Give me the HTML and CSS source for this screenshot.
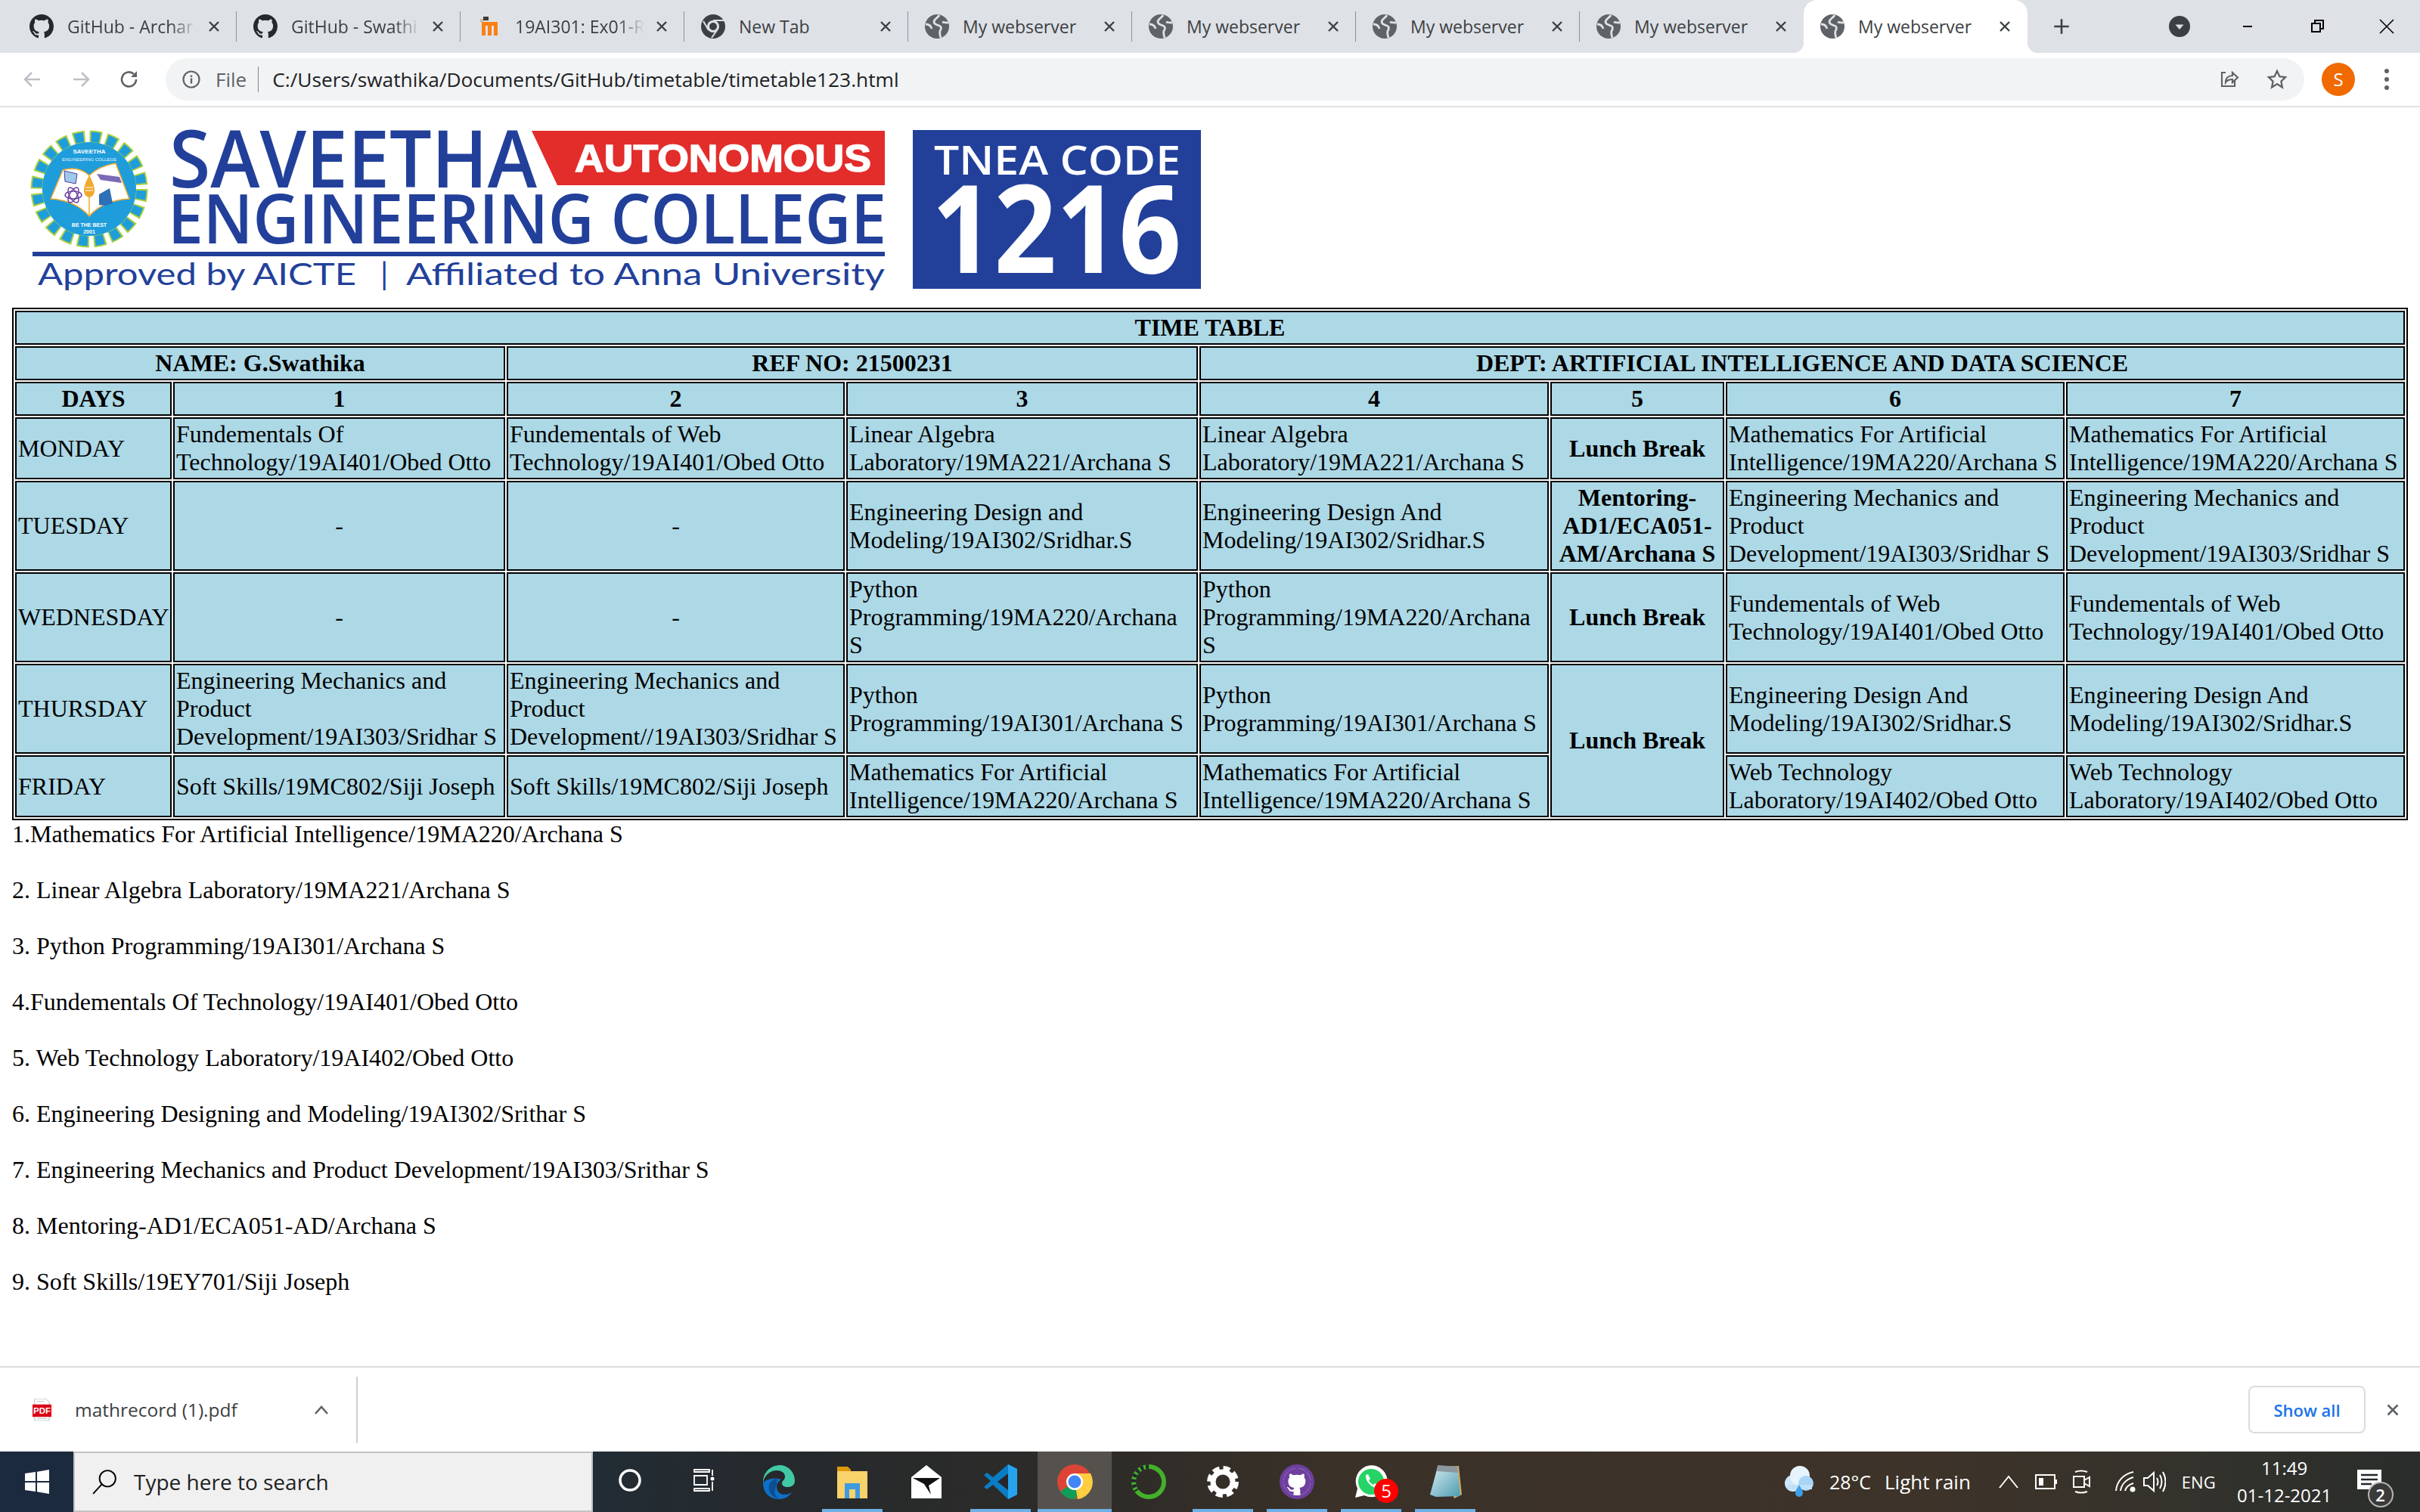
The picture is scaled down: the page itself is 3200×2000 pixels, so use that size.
FILE: index.html
```html
<!DOCTYPE html>
<html lang="en">
<head>
  <meta charset="UTF-8" />
  <title>My webserver</title>
  <link rel="stylesheet" href="styles.css">
</head>
<body>

  <svg class="defs" width="0" height="0">
    <symbol id="gh" viewBox="0 0 16 16">
      <path d="M8 0C3.58 0 0 3.58 0 8c0 3.54 2.29 6.53 5.47 7.59.4.07.55-.17.55-.38 0-.19-.01-.82-.01-1.49-2.01.37-2.53-.49-2.78-.94-.09-.23-.48-.94-.82-1.13-.28-.15-.68-.52-.01-.53.63-.01 1.08.58 1.23.82.72 1.21 1.87.87 2.33.66.07-.52.28-.87.51-1.07-1.78-.2-3.64-.89-3.64-3.95 0-.87.31-1.59.82-2.15-.08-.2-.36-1.02.08-2.12 0 0 .67-.21 2.2.82.64-.18 1.32-.27 2-.27.68 0 1.36.09 2 .27 1.53-1.04 2.2-.82 2.2-.82.44 1.1.16 1.92.08 2.12.51.56.82 1.27.82 2.15 0 3.07-1.87 3.75-3.65 3.95.29.25.54.73.54 1.48 0 1.07-.01 1.93-.01 2.2 0 .21.15.46.55.38A8.013 8.013 0 0016 8c0-4.42-3.58-8-8-8z"/>
    </symbol>
    <symbol id="globe" viewBox="0 0 32 32">
      <circle cx="16" cy="16" r="16" fill="#5f6368"/>
      <path d="M19 1C17 5 12 6 12 10c0 3 4 4 7 5 3 1 3 4 1 7-1 3 0 6 1 9M1 13c4 0 7 2 8 6M23 10c2 1 5 1 8 1" fill="none" stroke="#dee1e6" stroke-width="2.800"/>
    </symbol>
    <symbol id="close" viewBox="0 0 24 24">
      <path d="M6 6l12 12M18 6L6 18" fill="none" stroke="currentColor" stroke-width="2.4"/>
    </symbol>
    <linearGradient id="pad" x1="0" y1="0" x2="1" y2="1">
      <stop offset="0" stop-color="#d7edf3"/>
      <stop offset="1" stop-color="#4d9bb0"/>
    </linearGradient>
  </svg>

  <header class="tabs">
    <div class="tab">
      <svg class="favicon dark"><use href="#gh"/></svg>
      <span class="tab-title fade">GitHub - Archar</span>
      <svg class="tab-x"><use href="#close"/></svg>
    </div>
    <div class="tab">
      <svg class="favicon dark"><use href="#gh"/></svg>
      <span class="tab-title fade">GitHub - Swathi</span>
      <svg class="tab-x"><use href="#close"/></svg>
    </div>
    <div class="tab">
      <svg class="favicon" viewBox="0 0 32 32">
        <path d="M4 6h4v4H4z" fill="#c9b9a8"/>
        <path d="M8 3h7v5h-7z" fill="#3f3a36"/>
        <path d="M6 10h5v18H6zM14 12h5v16h-5zM22 12h5v16h-5zM6 10h21v5H6z" fill="#f98012"/>
      </svg>
      <span class="tab-title fade">19AI301: Ex01-R</span>
      <svg class="tab-x"><use href="#close"/></svg>
    </div>
    <div class="tab">
      <svg class="favicon" viewBox="0 0 32 32">
        <circle cx="16" cy="16" r="16" fill="#3c4043"/>
        <circle cx="16" cy="16" r="8" fill="#dee1e6"/>
        <circle cx="16" cy="16" r="5" fill="#3c4043"/>
        <path d="M16 8h14M10 21L3 9M21 21l-7 10" stroke="#dee1e6" stroke-width="2" fill="none"/>
      </svg>
      <span class="tab-title">New Tab</span>
      <svg class="tab-x"><use href="#close"/></svg>
    </div>
    <div class="tab">
      <svg class="favicon"><use href="#globe"/></svg>
      <span class="tab-title">My webserver</span>
      <svg class="tab-x"><use href="#close"/></svg>
    </div>
    <div class="tab">
      <svg class="favicon"><use href="#globe"/></svg>
      <span class="tab-title">My webserver</span>
      <svg class="tab-x"><use href="#close"/></svg>
    </div>
    <div class="tab">
      <svg class="favicon"><use href="#globe"/></svg>
      <span class="tab-title">My webserver</span>
      <svg class="tab-x"><use href="#close"/></svg>
    </div>
    <div class="tab no-sep">
      <svg class="favicon"><use href="#globe"/></svg>
      <span class="tab-title">My webserver</span>
      <svg class="tab-x"><use href="#close"/></svg>
    </div>
    <div class="tab active">
      <svg class="favicon"><use href="#globe"/></svg>
      <span class="tab-title">My webserver</span>
      <svg class="tab-x"><use href="#close"/></svg>
    </div>
    <svg class="new-tab" viewBox="0 0 24 24"><path d="M12 3v18M3 12h18" stroke="#3c4043" stroke-width="2.4"/></svg>
    <svg class="tab-search" viewBox="0 0 28 28">
      <circle cx="14" cy="14" r="14" fill="#3c4043"/>
      <path d="M8.5 11.5h11L14 18z" fill="#dee1e6"/>
    </svg>
    <svg class="win-btn first" viewBox="0 0 24 24"><path d="M6 12h12" stroke="#000" stroke-width="2"/></svg>
    <svg class="win-btn" viewBox="0 0 24 24"><path d="M5 8h11v11H5zM9 8V4h11v11h-4" fill="none" stroke="#000" stroke-width="2"/></svg>
    <svg class="win-btn" viewBox="0 0 24 24"><path d="M3 3l18 18M21 3L3 21" stroke="#000" stroke-width="1.6"/></svg>
  </header>

  <nav class="toolbar">
    <svg class="nav-icon muted" viewBox="0 0 28 28"><path d="M24 14H5M13 5l-9 9 9 9" fill="none" stroke="currentColor" stroke-width="2.6"/></svg>
    <svg class="nav-icon muted" viewBox="0 0 28 28"><path d="M4 14h19M15 5l9 9-9 9" fill="none" stroke="currentColor" stroke-width="2.6"/></svg>
    <svg class="nav-icon" viewBox="0 0 28 28"><path d="M23 14a9.5 9.5 0 1 1-3-7" fill="none" stroke="currentColor" stroke-width="2.6"/><path d="M24 3v8h-8z" fill="currentColor"/></svg>
    <div class="omnibox">
      <svg class="info" viewBox="0 0 24 24">
        <circle cx="12" cy="12" r="10.5" fill="none" stroke="#5f6368" stroke-width="2.2"/>
        <path d="M12 10.5v7M12 6.5v2.4" stroke="#5f6368" stroke-width="2.4"/>
      </svg>
      <span class="scheme">File</span>
      <span class="url">C:/Users/swathika/Documents/GitHub/timetable/timetable123.html</span>
      <svg class="omni-icon share" viewBox="0 0 28 28">
        <path d="M10 5H5v18h17v-7" fill="none" stroke="#5f6368" stroke-width="2.2"/>
        <path d="M10 18c0-6 4-9 9-9V5l7 6.5L19 18v-4c-4 0-7 1-9 4z" fill="none" stroke="#5f6368" stroke-width="2.2"/>
      </svg>
      <svg class="omni-icon" viewBox="0 0 28 28">
        <path d="M14 3l3.4 7.2 7.6 1-5.6 5.4 1.5 7.9L14 20l-6.900 4.500 1.500-7.900L3 11.200l7.600-1z" fill="none" stroke="#5f6368" stroke-width="2.300"/>
      </svg>
    </div>
    <div class="avatar">S</div>
    <svg class="dots" viewBox="0 0 8 32"><circle cx="4" cy="5" r="3"/><circle cx="4" cy="16" r="3"/><circle cx="4" cy="27" r="3"/></svg>
  </nav>

  <main class="page">
    <svg class="logo" viewBox="16 150 1600 257">
      <!-- seal -->
      <circle cx="118" cy="250" r="69" fill="none" stroke="#a9cf3f" stroke-width="17" stroke-dasharray="15.500 6.180"/>
      <circle cx="118" cy="250" r="69" fill="none" stroke="#1f9ddb" stroke-width="13" stroke-dasharray="11.500 10.180" stroke-dashoffset="-2"/>
      <circle cx="118" cy="250" r="62" fill="#1f9ddb"/>
      <text class="seal-name" x="118" y="203" text-anchor="middle">SAVEETHA</text>
      <text class="seal-sub" x="118" y="213" text-anchor="middle">ENGINEERING COLLEGE</text>
      <path d="M83 225q20-6 35 7 14-13 35-16l18 47q-35 2-53 23-18-21-51-23z" fill="#fff" stroke="#f1a92d" stroke-width="1.500"/>
      <path d="M118 232v54" stroke="#f1a92d" stroke-width="1.500"/>
      <path d="M118 232q7 12 7 20a7 9 0 0 1-14 0q0-8 7-20z" fill="#f1a92d"/>
      <path d="M113 248h10M113 252h10" stroke="#fff"/>
      <path d="M85 226l17 4-2 13-14-3z" fill="#9fc9ea" stroke="#4b3a9a"/>
      <ellipse cx="97" cy="258" rx="11" ry="5" fill="none" stroke="#6b3fa0" stroke-width="1.500"/>
      <ellipse cx="97" cy="258" rx="11" ry="5" fill="none" stroke="#6b3fa0" stroke-width="1.500" transform="rotate(60 97 258)"/>
      <ellipse cx="97" cy="258" rx="11" ry="5" fill="none" stroke="#6b3fa0" stroke-width="1.500" transform="rotate(120 97 258)"/>
      <path d="M128 230l30 4 3 8-28-4z" fill="#7b6bb5"/>
      <path d="M131 257l14-8 4 20-10 3-8-1z" fill="#2f6fb5"/>
      <text class="seal-motto" x="118" y="300" text-anchor="middle">BE THE BEST</text>
      <text class="seal-motto" x="118" y="309" text-anchor="middle">2001</text>
      <!-- wordmark -->
      <path d="M703 173h467v72H737z" fill="#e32d2b"/>
      <text class="logo-word" x="224" y="248" font-size="105" textLength="486" lengthAdjust="spacingAndGlyphs">SAVEETHA</text>
      <text class="logo-auto" x="760" y="227" font-size="50" textLength="392" lengthAdjust="spacingAndGlyphs">AUTONOMOUS</text>
      <text class="logo-word" x="222" y="322" font-size="90" textLength="950" lengthAdjust="spacingAndGlyphs">ENGINEERING COLLEGE</text>
      <rect x="43" y="333" width="1127" height="6" fill="#22409a"/>
      <text class="logo-line" x="50" y="377" font-size="41" textLength="421" lengthAdjust="spacingAndGlyphs">Approved by AICTE</text>
      <text class="logo-line" x="503" y="377" font-size="41">|</text>
      <text class="logo-line" x="537" y="377" font-size="41" textLength="633" lengthAdjust="spacingAndGlyphs">Affiliated to Anna University</text>
      <!-- code box -->
      <rect x="1207" y="172" width="381" height="210" fill="#22409a"/>
      <text class="logo-code" x="1235" y="231" font-size="53" textLength="326" lengthAdjust="spacingAndGlyphs">TNEA CODE</text>
      <text class="logo-num" x="1232" y="361" font-size="162" textLength="330" lengthAdjust="spacingAndGlyphs">1216</text>
    </svg>

    <table class="timetable">
      <colgroup>
        <col class="c-days"><col class="c-1"><col class="c-2"><col class="c-3">
        <col class="c-4"><col class="c-5"><col class="c-6"><col class="c-7">
      </colgroup>
      <tr><th colspan="8">TIME TABLE</th></tr>
      <tr>
        <th colspan="2">NAME: G.Swathika</th>
        <th colspan="2">REF NO: 21500231</th>
        <th colspan="4">DEPT: ARTIFICIAL INTELLIGENCE AND DATA SCIENCE</th>
      </tr>
      <tr>
        <th>DAYS</th><th>1</th><th>2</th><th>3</th><th>4</th><th>5</th><th>6</th><th>7</th>
      </tr>
      <tr>
        <td>MONDAY</td>
        <td>Fundementals Of Technology/19AI401/Obed Otto</td>
        <td>Fundementals of Web Technology/19AI401/Obed Otto</td>
        <td>Linear Algebra Laboratory/19MA221/Archana S</td>
        <td>Linear Algebra Laboratory/19MA221/Archana S</td>
        <th>Lunch Break</th>
        <td>Mathematics For Artificial Intelligence/19MA220/Archana S</td>
        <td>Mathematics For Artificial Intelligence/19MA220/Archana S</td>
      </tr>
      <tr>
        <td>TUESDAY</td>
        <td class="free">-</td>
        <td class="free">-</td>
        <td>Engineering Design and Modeling/19AI302/Sridhar.S</td>
        <td>Engineering Design And Modeling/19AI302/Sridhar.S</td>
        <th>Mentoring-AD1/ECA051-AM/Archana S</th>
        <td>Engineering Mechanics and Product Development/19AI303/Sridhar S</td>
        <td>Engineering Mechanics and Product Development/19AI303/Sridhar S</td>
      </tr>
      <tr>
        <td>WEDNESDAY</td>
        <td class="free">-</td>
        <td class="free">-</td>
        <td>Python Programming/19MA220/Archana S</td>
        <td>Python Programming/19MA220/Archana S</td>
        <th>Lunch Break</th>
        <td>Fundementals of Web Technology/19AI401/Obed Otto</td>
        <td>Fundementals of Web Technology/19AI401/Obed Otto</td>
      </tr>
      <tr>
        <td>THURSDAY</td>
        <td>Engineering Mechanics and Product Development/19AI303/Sridhar S</td>
        <td>Engineering Mechanics and Product Development//19AI303/Sridhar S</td>
        <td>Python Programming/19AI301/Archana S</td>
        <td>Python Programming/19AI301/Archana S</td>
        <th rowspan="2">Lunch Break</th>
        <td>Engineering Design And Modeling/19AI302/Sridhar.S</td>
        <td>Engineering Design And Modeling/19AI302/Sridhar.S</td>
      </tr>
      <tr>
        <td>FRIDAY</td>
        <td>Soft Skills/19MC802/Siji Joseph</td>
        <td>Soft Skills/19MC802/Siji Joseph</td>
        <td>Mathematics For Artificial Intelligence/19MA220/Archana S</td>
        <td>Mathematics For Artificial Intelligence/19MA220/Archana S</td>
        <td>Web Technology Laboratory/19AI402/Obed Otto</td>
        <td>Web Technology Laboratory/19AI402/Obed Otto</td>
      </tr>
    </table>

    <div class="legend">
      1.Mathematics For Artificial Intelligence/19MA220/Archana S<br><br>
      2. Linear Algebra Laboratory/19MA221/Archana S<br><br>
      3. Python Programming/19AI301/Archana S<br><br>
      4.Fundementals Of Technology/19AI401/Obed Otto<br><br>
      5. Web Technology Laboratory/19AI402/Obed Otto<br><br>
      6. Engineering Designing and Modeling/19AI302/Srithar S<br><br>
      7. Engineering Mechanics and Product Development/19AI303/Srithar S<br><br>
      8. Mentoring-AD1/ECA051-AD/Archana S<br><br>
      9. Soft Skills/19EY701/Siji Joseph
    </div>
  </main>

  <footer class="shelf">
    <svg class="pdf" viewBox="0 0 26 30">
      <path d="M3 0h15l5 5v25H3z" fill="#fff" stroke="#b8b8b8"/>
      <path d="M6 4h10M6 27h14" stroke="#b8b8b8"/>
      <rect x="0" y="8" width="26" height="17" fill="#dc0014"/>
      <text class="pdf-label" x="13" y="21" text-anchor="middle">PDF</text>
    </svg>
    <span class="file-name">mathrecord (1).pdf</span>
    <svg class="caret" viewBox="0 0 20 14"><path d="M2 12l8-9 8 9" fill="none" stroke="#5f6368" stroke-width="2.600"/></svg>
    <div class="shelf-sep"></div>
    <button class="show-all">Show all</button>
    <svg class="shelf-x" viewBox="0 0 24 24"><use href="#close"/></svg>
  </footer>

  <div class="taskbar">
    <div class="start">
      <svg class="win-logo" viewBox="0 0 32 32"><path d="M0 5l14-2v12H0zM16 2.700L32 0v15H16zM0 17h14v12L0 27zM16 17h16v15l-16-2.700z" fill="#fff"/></svg>
    </div>
    <div class="search">
      <svg class="search-icon" viewBox="0 0 32 32"><circle cx="20" cy="12" r="10" fill="none" stroke="#000" stroke-width="1.800"/><path d="M13 19L2 31" stroke="#000" stroke-width="1.800"/></svg>
      <span>Type here to search</span>
    </div>
    <div class="slot">
      <svg class="icon-md" viewBox="0 0 32 32"><circle cx="16" cy="16" r="13" fill="none" stroke="#fff" stroke-width="3.500"/></svg>
    </div>
    <div class="slot">
      <svg class="icon-md" viewBox="0 0 32 32"><path d="M3 2h20v3H3zM3 27h20v3H3zM3 10h17v12H3z" fill="none" stroke="#fff" stroke-width="1.800"/><circle cx="27" cy="14" r="2.500" fill="#fff"/><path d="M27 18v12M27 2v8" stroke="#fff" stroke-width="1.800"/></svg>
    </div>
    <div class="slot">
      <svg class="icon" viewBox="0 0 48 48">
        <path d="M4 26C3 12 14 2 26 2c12 0 20 10 20 21 0 4-3 8-9 8-5 0-8-2-8-5 0-4 4-4 4-9 0-5-5-8-11-8C13 9 5 16 4 26z" fill="#41c9a6"/>
        <path d="M4 26c0 13 9 21 21 21 8 0 14-4 17-9-10 6-20 2-20-7 0-5 3-8 6-10-9-3-22 0-24 5z" fill="#0f6fc6"/>
        <path d="M22 20c-7 1-12 7-10 15 2 7 8 11 14 12-5-3-8-8-6-13 1-4 3-7 2-14z" fill="#0a4f94"/>
      </svg>
    </div>
    <div class="slot tile-open">
      <svg class="icon" viewBox="0 0 48 48">
        <path d="M4 4h14l4 4v8H4z" fill="#dc9a0c"/>
        <path d="M4 10h40v36H4z" fill="#f8d26a"/>
        <path d="M14 46V26h20v20h-6V34h-8v12z" fill="#3f9ae0"/>
      </svg>
    </div>
    <div class="slot">
      <svg class="icon" viewBox="0 0 48 48">
        <path d="M24 2L44 18v28H4V18z" fill="#fff"/>
        <path d="M6 19h36L27 29l3 12-9-14z" fill="#111"/>
      </svg>
    </div>
    <div class="slot tile-open">
      <svg class="icon" viewBox="0 0 48 48">
        <path d="M34 1l12 6v34l-12 6-20-19-8 6-4-3 9-8-9-8 4-3 8 6z" fill="#0a7cc4"/>
        <path d="M34 1l12 6v34l-12 6z" fill="#27a3ee"/>
        <path d="M34 13L20 24l14 11z" fill="#23272b"/>
      </svg>
    </div>
    <div class="slot tile-active">
      <svg class="icon" viewBox="0 0 48 48">
        <circle cx="24" cy="24" r="23" fill="#db4437"/>
        <path d="M24 24L5 37A23 23 0 0 0 24 47l10-13z" fill="#0f9d58"/>
        <path d="M24 13h21a23 23 0 0 1-17 34l-4-23z" fill="#ffcd40"/>
        <circle cx="24" cy="24" r="11" fill="#fff"/>
        <circle cx="24" cy="24" r="8.500" fill="#4285f4"/>
      </svg>
    </div>
    <div class="slot">
      <svg class="icon" viewBox="0 0 48 48">
        <circle cx="24" cy="24" r="20" fill="none" stroke="#43b02a" stroke-width="6"/>
        <path d="M24 4A20 20 0 0 0 8 36" fill="none" stroke="#23272b" stroke-width="6" stroke-dasharray="4 3"/>
      </svg>
    </div>
    <div class="slot tile-open">
      <svg class="icon gear" viewBox="0 0 48 48">
        <circle cx="24" cy="24" r="13" fill="none" stroke="#fff" stroke-width="7"/>
        <circle cx="24" cy="24" r="18" fill="none" stroke="#fff" stroke-width="6" stroke-dasharray="9 5.140"/>
      </svg>
    </div>
    <div class="slot tile-open">
      <svg class="icon" viewBox="0 0 48 48">
        <circle cx="24" cy="24" r="23" fill="#6e3f9e"/>
        <circle cx="24" cy="24" r="18" fill="#fff"/>
        <use href="#gh" class="gh-purple" x="6" y="6" width="36" height="36"/>
      </svg>
    </div>
    <div class="slot tile-open">
      <svg class="icon" viewBox="0 0 48 48">
        <path d="M3 45l3-12A21 21 0 1 1 15 42z" fill="#fff"/>
        <circle cx="24" cy="24" r="17" fill="#25d366"/>
        <path d="M17 15l3-1 3 6-2 2c1 3 4 5 6 6l2-2 6 3-1 3c-5 2-18-6-17-17z" fill="#fff"/>
      </svg>
      <span class="badge">5</span>
    </div>
    <div class="slot tile-open">
      <svg class="icon" viewBox="0 0 48 48">
        <path d="M20 4l22-1 4 38-10 5z" fill="#c9a866"/>
        <path d="M14 4l26 1 4 38-32 1-8-3z" fill="url(#pad)"/>
        <path d="M14 2l26 2 1 8-28-2z" fill="#8b979c"/>
      </svg>
    </div>

    <div class="tray">
      <svg class="weather" viewBox="0 0 40 44">
        <circle cx="13" cy="24" r="11" fill="#cfe7fb"/>
        <circle cx="22" cy="14" r="13" fill="#e8f4fd"/>
        <circle cx="30" cy="24" r="10" fill="#a9d4f5"/>
        <path d="M6 26h32v6H6z" fill="#bfe0f8"/>
        <path d="M21 26c3 5 5 8 5 11a5 5 0 0 1-10 0c0-3 2-6 5-11z" fill="#3fa0e8"/>
      </svg>
      <span class="temp">28°C</span>
      <span class="sky">Light rain</span>
      <svg class="tray-icon t-caret" viewBox="0 0 32 32"><path d="M4 24l12-15 12 15" fill="none" stroke="#fff" stroke-width="2"/></svg>
      <svg class="tray-icon t-batt" viewBox="0 0 32 32"><path d="M3 7h25v18H3z" fill="none" stroke="#fff" stroke-width="2"/><path d="M7 11h6v10H7z" fill="#fff"/><path d="M30 13v6" stroke="#fff" stroke-width="2"/></svg>
      <svg class="tray-icon t-cam" viewBox="0 0 32 32"><path d="M6 9h14v14H6z" fill="none" stroke="#fff" stroke-width="2"/><path d="M20 14l7-4v12l-7-4" fill="none" stroke="#fff" stroke-width="2"/><path d="M8 3q8-3 16 0M8 29q8 3 16 0" fill="none" stroke="#fff" stroke-width="2"/></svg>
      <svg class="tray-icon t-wifi" viewBox="0 0 32 32"><path d="M3 28C4 16 12 6 26 3M9 28c1-8 7-15 17-18M15 28c1-4 4-8 11-10" fill="none" stroke="#fff" stroke-width="2"/><circle cx="25" cy="26" r="3.500" fill="#fff"/></svg>
      <svg class="tray-icon t-vol" viewBox="0 0 32 32"><path d="M3 11h5l8-7v24l-8-7H3z" fill="none" stroke="#fff" stroke-width="2"/><path d="M20 11q3 5 0 10M24 7q5 9 0 18M28 3q7 13 0 26" fill="none" stroke="#fff" stroke-width="2"/></svg>
      <span class="lang">ENG</span>
      <div class="clock"><span>11:49</span><span>01-12-2021</span></div>
      <div class="notify">
        <svg class="note" viewBox="0 0 32 32"><path d="M0 0h32v26H0z" fill="#fff"/><path d="M5 7h22M5 13h22M5 19h14" stroke="#23272b" stroke-width="2.500"/></svg>
        <span class="note-count">2</span>
      </div>
    </div>
  </div>

</body>
</html>
```

FILE: styles.css
```css
html, body {
  margin: 0;
  height: 100%;
}
body {
  width: 3200px;
  height: 2000px;
  display: flex;
  flex-direction: column;
  overflow: hidden;
  background: #fff;
  font-family: "Open Sans", sans-serif;
}
.defs {
  display: block;
  height: 0;
}

/* tab strip */
.tabs {
  display: flex;
  align-items: center;
  height: 70px;
  padding-left: 17px;
  background: #dee1e6;
  flex: none;
}
.tab {
  display: flex;
  align-items: center;
  box-sizing: border-box;
  width: 296px;
  height: 70px;
  padding-left: 22px;
  color: #3c4043;
  background: linear-gradient(#8d9094, #8d9094) right center / 1px 40px no-repeat;
}
.tab.no-sep {
  background: none;
}
.tab.active {
  position: relative;
  background: #fff;
  border-radius: 18px 18px 0 0;
}
.tab.active::before,
.tab.active::after {
  content: "";
  position: absolute;
  bottom: 0;
  width: 14px;
  height: 14px;
}
.tab.active::before {
  left: -14px;
  background: radial-gradient(circle at 0 0, #dee1e6 14px, #fff 14.500px);
}
.tab.active::after {
  right: -14px;
  background: radial-gradient(circle at 100% 0, #dee1e6 14px, #fff 14.500px);
}
.favicon {
  width: 32px;
  height: 32px;
  flex: none;
}
.favicon.dark {
  fill: #24292e;
}
.tab-title {
  width: 171px;
  margin-left: 18px;
  font-size: 23px;
  white-space: nowrap;
  overflow: hidden;
}
.tab-title.fade {
  -webkit-mask-image: linear-gradient(90deg, #000 80%, transparent);
  mask-image: linear-gradient(90deg, #000 80%, transparent);
}
.tab-x {
  width: 24px;
  height: 24px;
  margin-left: 11px;
  color: #3c4043;
  flex: none;
}
.new-tab {
  width: 26px;
  height: 26px;
  margin-left: 32px;
  flex: none;
}
.tab-search {
  width: 28px;
  height: 28px;
  margin-left: 129px;
  flex: none;
}
.win-btn {
  width: 24px;
  height: 24px;
  margin-left: 68px;
  flex: none;
}
.win-btn.first {
  margin-left: 64px;
}

/* address bar */
.toolbar {
  display: flex;
  align-items: center;
  box-sizing: border-box;
  height: 72px;
  padding-left: 29px;
  border-bottom: 2px solid #dfe1e5;
  flex: none;
}
.nav-icon {
  width: 28px;
  height: 28px;
  margin-right: 36px;
  color: #5f6368;
  flex: none;
}
.nav-icon.muted {
  color: #bdc1c6;
}
.omnibox {
  display: flex;
  align-items: center;
  box-sizing: border-box;
  width: 2828px;
  height: 56px;
  margin-left: -2px;
  padding: 0 22px;
  border-radius: 28px;
  background: #f1f3f4;
}
.info {
  width: 24px;
  height: 24px;
  flex: none;
}
.scheme {
  padding-right: 15px;
  margin-left: 20px;
  border-right: 1px solid #80868b;
  color: #5f6368;
  font-size: 26px;
  line-height: 34px;
}
.url {
  margin-left: 18px;
  color: #202124;
  font-size: 26.300px;
  flex: 1;
}
.omni-icon {
  width: 28px;
  height: 28px;
  flex: none;
}
.omni-icon.share {
  margin-right: 36px;
}
.avatar {
  width: 44px;
  height: 44px;
  margin-left: 23px;
  border-radius: 50%;
  background: #f06a00;
  color: #fff;
  font-size: 24px;
  line-height: 44px;
  text-align: center;
  flex: none;
}
.dots {
  width: 8px;
  height: 32px;
  margin-left: 38px;
  fill: #5f6368;
  flex: none;
}

/* page body */
.page {
  flex: 1;
  min-height: 0;
  padding: 8px 16px 0;
  overflow: hidden;
  font-family: "Liberation Serif", "Times New Roman", serif;
  font-size: 32px;
  color: #000;
}
.logo {
  display: block;
  width: 1600px;
  height: 257px;
}
.seal-name {
  font: bold 8px "Liberation Sans", sans-serif;
  fill: #fff;
}
.seal-sub {
  font: 6px "Liberation Sans", sans-serif;
  fill: #e4f3fb;
}
.seal-motto {
  font: bold 7px "Liberation Sans", sans-serif;
  fill: #fff;
}
.logo-word {
  font-family: "Open Sans", sans-serif;
  font-weight: 600;
  fill: #22409a;
}
.logo-auto {
  font-family: "Liberation Sans", sans-serif;
  font-weight: bold;
  fill: #fff;
  stroke: #fff;
  stroke-width: 1.500px;
}
.logo-line {
  font-family: "Lato", sans-serif;
  fill: #22409a;
}
.logo-code {
  font-family: "Open Sans", sans-serif;
  font-weight: 600;
  fill: #fff;
}
.logo-num {
  font-family: "Open Sans", sans-serif;
  font-weight: bold;
  fill: #fff;
}

.timetable {
  box-sizing: border-box;
  width: 3168px;
  table-layout: fixed;
  border: 2px solid #000;
  border-spacing: 2px;
  background: #fff;
}
.timetable th,
.timetable td {
  padding: 2px;
  border: 2px solid #000;
  background: #add8e6;
  line-height: 37px;
}
.timetable .free {
  text-align: center;
}
.c-days { width: 207px; }
.c-1 { width: 439px; }
.c-2 { width: 447px; }
.c-3 { width: 465px; }
.c-4 { width: 462px; }
.c-5 { width: 230px; }
.c-6 { width: 448px; }
.c-7 { width: 448px; }

.legend {
  line-height: 37px;
}

/* download shelf */
.shelf {
  display: flex;
  align-items: center;
  box-sizing: border-box;
  height: 113px;
  padding-left: 43px;
  border-top: 2px solid #dadada;
  flex: none;
}
.pdf {
  width: 25px;
  height: 29px;
  flex: none;
}
.pdf-label {
  font: bold 12px "Liberation Sans", sans-serif;
  fill: #fff;
}
.file-name {
  width: 316px;
  margin-left: 31px;
  color: #3c4043;
  font-size: 24.500px;
}
.caret {
  width: 20px;
  height: 14px;
  flex: none;
}
.shelf-sep {
  width: 2px;
  height: 88px;
  margin-left: 36px;
  background: #cfcfcf;
}
.show-all {
  width: 155px;
  height: 63px;
  margin-left: auto;
  padding: 0;
  border: 2px solid #dadce0;
  border-radius: 8px;
  background: #fff;
  color: #1a73e8;
  font: 600 22px "Open Sans", sans-serif;
}
.shelf-x {
  width: 26px;
  height: 26px;
  margin: 0 23px;
  color: #5f6368;
  flex: none;
}

/* windows taskbar */
.taskbar {
  display: flex;
  align-items: stretch;
  height: 80px;
  flex: none;
  color: #fff;
  background: linear-gradient(90deg, #1b2a3f 0, #1d2a3a 10%, #222c34 25%, #25292c 32%, #2f2c28 47%, #3a3128 55%, #3c3229 70%, #3d3329 80%, #33322c 91%, #2a2d2b 100%);
}
.start {
  display: flex;
  align-items: center;
  justify-content: center;
  width: 97px;
}
.win-logo {
  width: 32px;
  height: 32px;
}
.search {
  display: flex;
  align-items: center;
  box-sizing: border-box;
  width: 687px;
  padding-left: 22px;
  border: 2px solid #c2c2c2;
  background: #f0f0f0;
  color: #1f1f1f;
  font-size: 28px;
}
.search-icon {
  width: 34px;
  height: 34px;
  margin-right: 22px;
}
.slot {
  display: flex;
  align-items: center;
  justify-content: center;
  box-sizing: border-box;
  width: 98px;
  flex: none;
  border-bottom: 4px solid transparent;
  position: relative;
}
.tile-open {
  border-image: linear-gradient(90deg, transparent 10%, #6fb1e6 10%, #6fb1e6 90%, transparent 90%) 1;
}
.tile-active {
  background: #55524d;
  border-bottom-color: #6fb1e6;
}
.icon {
  width: 48px;
  height: 48px;
  margin-top: 4px;
}
.icon-md {
  width: 32px;
  height: 32px;
}
.gh-purple {
  fill: #6e3f9e;
}
.badge {
  position: absolute;
  left: 53px;
  top: 36px;
  width: 32px;
  height: 32px;
  border-radius: 50%;
  background: #f00;
  color: #fff;
  font-size: 24px;
  line-height: 32px;
  text-align: center;
}
.tray {
  display: flex;
  align-items: center;
  margin-left: 398px;
  font-size: 25px;
}
.weather {
  width: 40px;
  height: 44px;
  flex: none;
}
.temp {
  margin-left: 21px;
  white-space: nowrap;
}
.sky {
  margin-left: 18px;
  font-size: 26px;
  white-space: nowrap;
}
.tray-icon {
  width: 32px;
  height: 32px;
  flex: none;
}
.t-caret { margin-left: 34px; }
.t-batt { margin-left: 17px; }
.t-cam { margin-left: 15px; }
.t-wifi { margin-left: 27px; }
.t-vol { margin-left: 5px; }
.lang {
  margin-left: 21px;
  font-size: 22px;
}
.clock {
  display: flex;
  flex-direction: column;
  align-items: center;
  gap: 6px;
  width: 130px;
  margin-left: 26px;
  font-size: 24px;
  line-height: 30px;
}
.notify {
  position: relative;
  width: 32px;
  margin-left: 31px;
}
.note {
  display: block;
  width: 32px;
  height: 32px;
}
.note-count {
  position: absolute;
  left: 14px;
  top: 16px;
  width: 30px;
  height: 30px;
  border: 2px solid #b5b5b5;
  border-radius: 50%;
  background: #3a3a38;
  font-size: 22px;
  font-weight: 600;
  line-height: 30px;
  text-align: center;
}
```
